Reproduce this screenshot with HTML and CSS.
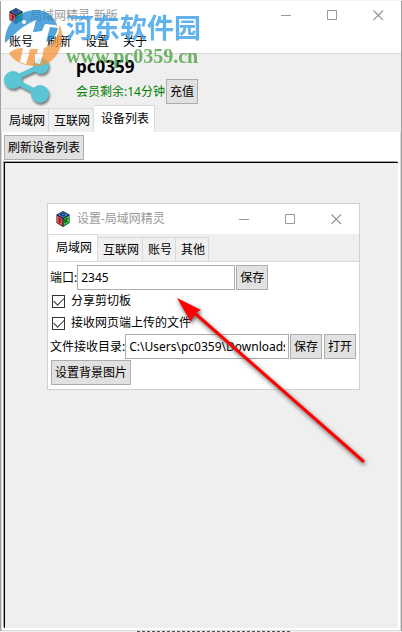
FILE: index.html
```html
<!DOCTYPE html>
<html lang="zh-CN">
<head>
<meta charset="utf-8">
<meta name="viewport" content="width=device-width, initial-scale=1">
<title>局域网精灵-新版</title>
<link rel="stylesheet" href="styles.css">
</head>
<body>
<svg class="defs" width="0" height="0" aria-hidden="true">
  <symbol id="cube" viewBox="0 0 14 16">
    <path d="M7 0 13.5 3.500V12L7 16 .5 12V3.500z" fill="#111"/>
    <path d="M7 .5 12.500 3.800 7 7 1.500 3.800z" fill="#3b78e0"/>
    <path d="M1 4.500 6.500 7.700V15L1 11.700z" fill="#ee4450"/>
    <path d="M13 4.500 7.500 7.700V15L13 11.700z" fill="#22c83c"/>
    <path d="M9 3 7 2 4.500 3.500 7 5 9 4M2.500 7.500 5 9M3.700 8.500V12M9 8V12M11.500 7 9.500 10 11.500 11" fill="none" stroke="#111" stroke-width=".8"/>
  </symbol>
  <symbol id="min" viewBox="0 0 11 11"><path d="M0 5.500H10" stroke="#999"/></symbol>
  <symbol id="max" viewBox="0 0 11 11"><path d="M.5.5H9.500V9.500H.5z" fill="none" stroke="#999"/></symbol>
  <symbol id="close" viewBox="0 0 11 11"><path d="M.5.5 10 10M10 .5.5 10" stroke="#999" stroke-width="1.200"/></symbol>
</svg>

<div class="window">
  <header class="titlebar">
    <svg class="app-icon"><use href="#cube"/></svg>
    <span class="title">局域网精灵-新版</span>
    <button class="caption" aria-label="最小化"><svg><use href="#min"/></svg></button>
    <button class="caption" aria-label="最大化"><svg><use href="#max"/></svg></button>
    <button class="caption" aria-label="关闭"><svg><use href="#close"/></svg></button>
  </header>
  <nav class="menubar">
    <button>账号</button><button>刷新</button><button>设置</button><button>关于</button>
  </nav>
  <section class="account">
    <h1>pc0359</h1>
    <div class="member"><span>会员剩余:14分钟</span><button class="btn">充值</button></div>
  </section>
  <div class="tabs" role="tablist">
    <button role="tab">局域网</button><button role="tab">互联网</button><button role="tab" class="active" aria-selected="true">设备列表</button>
  </div>
  <main class="page">
    <button class="btn">刷新设备列表</button>
    <div class="devices">
      <section class="dialog" role="dialog" aria-label="设置-局域网精灵">
        <header class="titlebar">
          <svg class="app-icon"><use href="#cube"/></svg>
          <span class="title">设置-局域网精灵</span>
          <button class="caption" aria-label="最小化"><svg><use href="#min"/></svg></button>
          <button class="caption" aria-label="最大化"><svg><use href="#max"/></svg></button>
          <button class="caption" aria-label="关闭"><svg><use href="#close"/></svg></button>
        </header>
        <div class="tabs" role="tablist">
          <button role="tab" class="active" aria-selected="true">局域网</button><button role="tab">互联网</button><button role="tab">账号</button><button role="tab">其他</button>
        </div>
        <form class="settings">
          <div class="row">
            <label for="port">端口:</label>
            <input class="field port" id="port" type="text" value="2345">
            <button class="btn" type="button">保存</button>
          </div>
          <label class="check"><input type="checkbox" checked>分享剪切板</label>
          <label class="check"><input type="checkbox" checked>接收网页端上传的文件</label>
          <div class="row">
            <label for="dir">文件接收目录:</label>
            <input class="field dir" id="dir" type="text" value="C:\Users\pc0359\Downloads">
            <div class="actions">
              <button class="btn" type="button">保存</button>
              <button class="btn" type="button">打开</button>
            </div>
          </div>
          <button class="btn background" type="button">设置背景图片</button>
        </form>
      </section>
    </div>
  </main>
</div>
<div class="behind"></div>

<div class="watermark">
  <svg class="logo" width="66" height="108" viewBox="0 0 66 108" aria-hidden="true">
    <g class="share" fill="#5bc4d5">
      <path d="M13 79 41 66M13 80 40 94" stroke="#5bc4d5" stroke-width="5"/>
      <circle cx="13" cy="80" r="9"/><circle cx="41" cy="66" r="8"/><circle cx="40" cy="94" r="9"/>
    </g>
    <mask id="cut">
      <path d="M0 0H66V70H0z" fill="#fff"/>
      <path d="M5 48C10 36 22 26 36 20L33 32 42 31 45 24 55 25 59 27C59 35 55 41 49 46L44 48 40 64 35 63 38 49 30 49 26 64 20 62 23 48Q15 48 9 53z"/>
      <circle cx="24" cy="22" r="2"/>
    </mask>
    <g opacity=".75">
      <g mask="url(#cut)">
        <path d="M5 43C4 25 18 10 36 10C46 10 54 16 57 25L56 30 48 42 26 43 14 35z" fill="#1c88d0"/>
        <path d="M8 51Q14 45 23 42L47 41C55 38 58 33 59 25Q63 30 62 39C61 55 50 66 36 66C23 66 12 61 8 51z" fill="#f5953a"/>
      </g>
      <path d="M38 54H35V63L40 64 43 54zM23 54 20 62 26 64 29 54z" fill="#fff"/>
      <path d="M39 21 43 23 39 31 33 32zM50 27 58 28C57 35 52 40 46 42z" fill="#1c88d0"/>
    </g>
  </svg>
  <div class="brand"><strong>河东软件园</strong><span>www.pc0359.cn</span></div>
</div>

<svg class="arrow" width="200" height="176" viewBox="0 0 200 176" aria-hidden="true">
  <path d="M20 18 193 170" stroke="#f00" stroke-width="3" stroke-linecap="round"/>
  <path d="M7 7 31 19 25 22 21 31z" fill="#f00"/>
</svg>
</body>
</html>
```
FILE: styles.css
```css
* { box-sizing: border-box; }

body {
  margin: 0;
  min-height: 100vh;
  display: flex;
  flex-direction: column;
  position: relative;
  overflow: hidden;
  background: #f3f3f3;
  color: #000;
  font: 12px/16px "Noto Sans", "Noto Sans CJK SC", sans-serif;
}

button, input { font: inherit; color: inherit; }
button { border: 0; padding: 0; background: none; white-space: nowrap; }
.defs { position: absolute; }

.window {
  flex: 1;
  display: flex;
  flex-direction: column;
  margin-top: 1px;
  border: solid #a0a0a0;
  border-width: 0 1px;
  background: #efefef;
}

.titlebar {
  display: flex;
  align-items: center;
  height: 29px;
  padding-left: 8px;
  background: #fff;
  color: #999;
}
.app-icon { width: 14px; height: 16px; margin-right: 7px; }
.title { flex: 1; }
.caption { width: 46px; height: 28px; display: grid; place-items: center; }
.caption svg { width: 11px; height: 11px; }

.menubar {
  display: flex;
  gap: 14px;
  height: 24px;
  padding-left: 8px;
  background: #fff;
  border-bottom: 1px solid #d9d9d9;
}

.account { height: 51px; padding-left: 75px; }
.account h1 { margin: 0; font-size: 17px; line-height: 25px; }
.member { display: flex; align-items: center; gap: 1px; color: #008000; }

.btn {
  height: 25px;
  padding: 0 3px;
  border: 1px solid #adadad;
  background: #e1e1e1;
  color: #000;
}

.tabs { display: flex; align-items: flex-end; height: 27px; padding-left: 3px; }
.tabs button {
  height: 24px;
  padding: 0 3px 0 5px;
  border: solid #d9d9d9;
  border-width: 1px 1px 0 0;
  background: #f0f0f0;
}
.tabs .active { height: 27px; padding: 0 5px 0 7px; background: #fff; }

.page {
  flex: 1;
  display: flex;
  flex-direction: column;
  align-items: flex-start;
  gap: 2px;
  padding: 3px 2px 2px;
  border: 1px solid #d9d9d9;
  border-top: 0;
  background: #fff;
}
.devices {
  flex: 1;
  align-self: stretch;
  position: relative;
  border: solid #000;
  border-width: 1px 0 0 1px;
  background: #efefef;
  box-shadow: -1px -1px #a0a0a0;
}

.dialog {
  position: absolute;
  top: 40px;
  left: 42px;
  width: 313px;
  border: 1px solid #d0d0d0;
  background: #efefef;
}
.dialog .titlebar { height: 30px; }
.dialog .tabs { height: 27px; padding-left: 1px; }

.settings {
  display: flex;
  flex-direction: column;
  align-items: flex-start;
  padding: 3px 3px 4px 2px;
  border-top: 1px solid #d9d9d9;
  background: #fff;
}
.row { display: flex; align-items: center; width: 100%; }
.row label { white-space: nowrap; }
.row .btn { margin-left: 1px; }
.actions { display: flex; gap: 1px; }
.field {
  min-width: 0;
  height: 25px;
  padding: 0 3px;
  border: 1px solid #adadad;
  border-radius: 0;
  background: #fff;
}
.port { width: 158px; }
.dir { flex: 1; }
.check { display: flex; align-items: center; gap: 6px; height: 22px; padding-left: 2px; }
.check input {
  appearance: none;
  display: grid;
  place-items: center;
  width: 13px;
  height: 13px;
  margin: 0;
  border: 1px solid #333;
}
.check input:checked::after {
  content: "";
  width: 9px;
  height: 5px;
  margin-bottom: 2px;
  border: solid #333;
  border-width: 0 0 1px 1px;
  transform: rotate(-45deg);
}
.background { margin: 1px 0 0 1px; }

.behind {
  height: 1px;
  margin: 0 112px 0 137px;
  border-bottom: 1px dashed #555;
}

.watermark { position: absolute; top: 0; left: 0; display: flex; pointer-events: none; }
.share { filter: drop-shadow(1px 2px 1px #777); }
.brand { display: flex; flex-direction: column; padding-top: 12px; opacity: .8; }
.brand strong { font-size: 27px; line-height: 32px; color: #3a9fe9; }
.brand span { font: bold 20px/24px "Liberation Serif", serif; color: #4da345; }

.arrow { position: absolute; top: 291px; left: 170px; pointer-events: none; filter: drop-shadow(1px 2px 2px #555); }
```
